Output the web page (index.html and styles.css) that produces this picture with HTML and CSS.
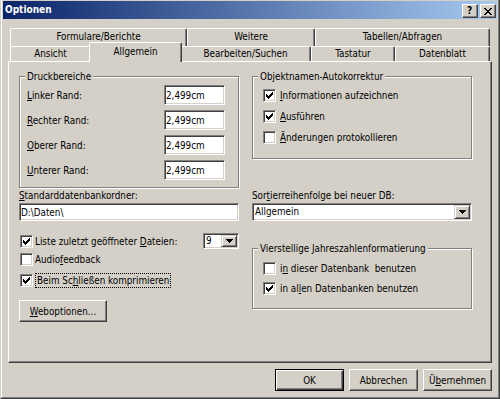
FILE: index.html
```html
<!DOCTYPE html>
<html lang="de">
<head>
<meta charset="utf-8">
<title>Optionen</title>
<link rel="stylesheet" href="styles.css">
</head>
<body>
<div class="window">
  <div class="frame">
    <div class="titlebar">
      <span class="title">Optionen</span>
      <div class="caption-buttons">
        <span class="cbtn help">?</span>
        <span class="cbtn close"><svg width="8" height="7" viewBox="0 0 8 7" shape-rendering="crispEdges"><path d="M0 0h2v1h-2zM6 0h2v1h-2zM1 1h2v1h-2zM5 1h2v1h-2zM2 2h4v1h-4zM3 3h2v1h-2zM2 4h4v1h-4zM1 5h2v1h-2zM5 5h2v1h-2zM0 6h2v1h-2zM6 6h2v1h-2z" fill="#000"/></svg></span>
      </div>
    </div>

    <div class="tabs">
      <div class="tabrow back">
        <div class="tab tab-formulare">Formulare/Berichte</div>
        <div class="tab tab-weitere">Weitere</div>
        <div class="tab tab-tabellen">Tabellen/Abfragen</div>
      </div>
      <div class="tabrow front">
        <div class="tab tab-ansicht">Ansicht</div>
        <div class="tab tab-allgemein active">Allgemein</div>
        <div class="tab tab-bearbeiten">Bearbeiten/Suchen</div>
        <div class="tab tab-tastatur">Tastatur</div>
        <div class="tab tab-datenblatt">Datenblatt</div>
      </div>
    </div>

    <div class="panel">
      <div class="grid">
        <fieldset class="group druck">
          <legend>Druckbereiche</legend>
          <div class="margins">
            <label><u>L</u>inker Rand:</label><input class="edit" type="text" value="2,499cm">
            <label><u>R</u>echter Rand:</label><input class="edit" type="text" value="2,499cm">
            <label><u>O</u>berer Rand:</label><input class="edit" type="text" value="2,499cm">
            <label><u>U</u>nterer Rand:</label><input class="edit" type="text" value="2,499cm">
          </div>
        </fieldset>

        <fieldset class="group auto">
          <legend>Objektnamen-Autokorrektur</legend>
          <div class="checks">
            <div class="check"><span class="box on"><svg width="7" height="7" viewBox="0 0 7 7" shape-rendering="crispEdges"><path d="M0 2h1v3h-1zM1 3h1v3h-1zM2 4h1v3h-1zM3 3h1v3h-1zM4 2h1v3h-1zM5 1h1v3h-1zM6 0h1v3h-1z" fill="#000"/></svg></span><span><u>I</u>nformationen aufzeichnen</span></div>
            <div class="check"><span class="box on"><svg width="7" height="7" viewBox="0 0 7 7" shape-rendering="crispEdges"><path d="M0 2h1v3h-1zM1 3h1v3h-1zM2 4h1v3h-1zM3 3h1v3h-1zM4 2h1v3h-1zM5 1h1v3h-1zM6 0h1v3h-1z" fill="#000"/></svg></span><span><u>A</u>usführen</span></div>
            <div class="check"><span class="box"></span><span><u>Ä</u>nderungen protokollieren</span></div>
          </div>
        </fieldset>

        <div class="field">
          <label><u>S</u>tandarddatenbankordner:</label>
          <input class="edit wide" type="text" value="D:\Daten\">
        </div>

        <div class="field">
          <label>Sor<u>t</u>ierreihenfolge bei neuer DB:</label>
          <div class="combo wide"><span class="combo-text">Allgemein</span><span class="drop"><svg width="7" height="4" viewBox="0 0 7 4" shape-rendering="crispEdges"><path d="M0 0h7v1h-7zM1 1h5v1h-5zM2 2h3v1h-3zM3 3h1v1h-1z" fill="#000"/></svg></span></div>
        </div>

        <div class="opts">
          <div class="row-list">
            <div class="check left"><span class="box on"><svg width="7" height="7" viewBox="0 0 7 7" shape-rendering="crispEdges"><path d="M0 2h1v3h-1zM1 3h1v3h-1zM2 4h1v3h-1zM3 3h1v3h-1zM4 2h1v3h-1zM5 1h1v3h-1zM6 0h1v3h-1z" fill="#000"/></svg></span><span>Liste zuletzt geöffneter <u>D</u>ateien:</span></div>
            <div class="combo small"><span class="combo-text">9</span><span class="drop"><svg width="7" height="4" viewBox="0 0 7 4" shape-rendering="crispEdges"><path d="M0 0h7v1h-7zM1 1h5v1h-5zM2 2h3v1h-3zM3 3h1v1h-1z" fill="#000"/></svg></span></div>
          </div>
          <div class="check left audio"><span class="box"></span><span>Audio<u>f</u>eedback</span></div>
          <div class="check left compact"><span class="box on"><svg width="7" height="7" viewBox="0 0 7 7" shape-rendering="crispEdges"><path d="M0 2h1v3h-1zM1 3h1v3h-1zM2 4h1v3h-1zM3 3h1v3h-1zM4 2h1v3h-1zM5 1h1v3h-1zM6 0h1v3h-1z" fill="#000"/></svg></span><span class="focus">Beim Sc<u>h</u>ließen komprimieren</span></div>
          <button class="btn web" type="button"><u>W</u>eboptionen...</button>
        </div>

        <fieldset class="group jahr">
          <legend>Vierstellige Jahreszahlenformatierung</legend>
          <div class="checks tight">
            <div class="check"><span class="box"></span><span>i<u>n</u> dieser Datenbank  benutzen</span></div>
            <div class="check"><span class="box on"><svg width="7" height="7" viewBox="0 0 7 7" shape-rendering="crispEdges"><path d="M0 2h1v3h-1zM1 3h1v3h-1zM2 4h1v3h-1zM3 3h1v3h-1zM4 2h1v3h-1zM5 1h1v3h-1zM6 0h1v3h-1z" fill="#000"/></svg></span><span>in al<u>l</u>en Datenbanken benutzen</span></div>
          </div>
        </fieldset>
      </div>
    </div>

    <div class="actions">
      <button class="btn default" type="button">OK</button>
      <button class="btn" type="button">Abbrechen</button>
      <button class="btn" type="button">Ü<u>b</u>ernehmen</button>
    </div>
  </div>
</div>
</body>
</html>
```

FILE: styles.css
```css
* { box-sizing: border-box; }

html, body {
  margin: 0;
  padding: 0;
}

body {
  width: 500px;
  height: 399px;
  overflow: hidden;
  background: #d4d0c8;
  color: #000;
  font-family: "DejaVu Sans Condensed", "DejaVu Sans", sans-serif;
  font-stretch: condensed;
  font-size: 9.8px;
}

u { text-decoration-thickness: 1px; text-underline-offset: 1px; }

.window {
  width: 500px;
  height: 399px;
  background: #d4d0c8;
  border-left: 1px solid #d4d0c8;
  border-right: 1px solid #404040;
  border-bottom: 1px solid #404040;
}

.frame {
  height: 100%;
  border-left: 1px solid #fff;
  border-right: 1px solid #808080;
  border-bottom: 1px solid #808080;
  padding: 1px 1px 0 1px;
  display: flex;
  flex-direction: column;
}

/* title bar */
.titlebar {
  height: 18px;
  flex: none;
  display: flex;
  justify-content: space-between;
  align-items: flex-start;
  padding: 0 1px 0 1px;
  background: linear-gradient(to right, #0a246a, #a6caf0);
}

.title {
  color: #fff;
  font-weight: bold;
  font-size: 10px;
  line-height: 18px;
  padding-left: 1px;
}

.caption-buttons {
  display: flex;
  gap: 2px;
  margin-top: 3px;
}

.cbtn {
  width: 16px;
  height: 14px;
  display: flex;
  align-items: center;
  justify-content: center;
  background: #d4d0c8;
  border: 1px solid;
  border-color: #fff #404040 #404040 #fff;
  box-shadow: inset -1px -1px #808080;
}

.cbtn.help {
  font-family: "DejaVu Sans", sans-serif;
  font-weight: bold;
  font-size: 10px;
  line-height: 12px;
  padding-right: 1px;
}

.cbtn.close svg { margin-right: 1px; }

/* tabs */
.tabs {
  flex: none;
  width: 480px;
  margin: 9px 0 0 7px;
}

.tabrow { display: flex; }
.tabrow.back { height: 18px; }
.tabrow.front { height: 15px; }

.tab {
  flex: none;
  height: 100%;
  text-align: center;
  white-space: nowrap;
  background: #d4d0c8;
  border-top: 1px solid #fff;
  border-left: 1px solid #fff;
  border-right: 1px solid #404040;
  border-radius: 2px 2px 0 0;
  box-shadow: inset -1px 0 #808080;
}

.back .tab { line-height: 16px; }
.front .tab { line-height: 13px; }

.tab-formulare { width: 177px; }
.tab-weitere { width: 128px; }
.tab-tabellen { width: 175px; }
.tab-ansicht { width: 81px; }
.tab-allgemein { width: 93px; }
.tab-bearbeiten { width: 131px; }
.tab-tastatur { width: 84px; }
.tab-datenblatt { width: 95px; }

.tab.active {
  position: relative;
  z-index: 2;
  height: 20px;
  margin: -4px -2px 0;
  line-height: 17px;
}

/* panel */
.panel {
  flex: none;
  width: 484px;
  height: 302px;
  margin-left: 5px;
  padding: 8px 0 0 10px;
  border-top: 1px solid #fff;
  border-left: 1px solid #fff;
  border-right: 1px solid #404040;
  border-bottom: 1px solid #404040;
  box-shadow: inset -1px -1px #808080;
}

.grid {
  display: grid;
  grid-template-columns: 220px 220px;
  column-gap: 13px;
  align-items: start;
}

.group {
  margin: 0;
  min-width: 0;
  border: 1px solid #808080;
  box-shadow: inset 1px 1px #fff, 1px 1px #fff;
}

.group legend {
  padding: 0 2px;
  line-height: 13px;
  background: #d4d0c8;
}

.druck { padding: 2px 12px 7px 7px; }
.druck legend { margin-left: -2px; }

.auto { padding: 6px 0 14px 10px; }
.auto legend { margin-left: -5px; }

.jahr { margin-top: 21px; padding: 7px 0 13px 10px; }
.jahr legend { margin-left: -5px; }

.margins {
  display: grid;
  grid-template-columns: 137px 61px;
  grid-auto-rows: 20px;
  row-gap: 5px;
  align-items: center;
}

.edit {
  display: block;
  margin: 0;
  height: 20px;
  padding: 0 1px;
  font: inherit;
  color: #000;
  background: #fff;
  border: 1px solid;
  border-color: #808080 #fff #fff #808080;
  box-shadow: inset 1px 1px #404040, inset -1px -1px #d4d0c8;
  outline: none;
}

.checks {
  display: flex;
  flex-direction: column;
  gap: 8px;
}

.checks.tight { gap: 7px; }

.check {
  display: flex;
  align-items: center;
  gap: 4px;
  height: 13px;
  line-height: 13px;
  white-space: pre;
}

.check.left { gap: 2px; margin-left: 1px; }

.box {
  flex: none;
  width: 13px;
  height: 13px;
  display: flex;
  align-items: center;
  justify-content: center;
  background: #fff;
  border: 1px solid;
  border-color: #808080 #fff #fff #808080;
  box-shadow: inset 1px 1px #404040, inset -1px -1px #d4d0c8;
}

/* lower fields */
.field label {
  display: block;
  line-height: 13px;
  margin-top: 1px;
}

.field .wide {
  margin-top: 1px;
  width: 100%;
  height: 18px;
}

.combo {
  display: flex;
  align-items: stretch;
  background: #fff;
  border: 1px solid;
  border-color: #808080 #fff #fff #808080;
  box-shadow: inset 1px 1px #404040, inset -1px -1px #d4d0c8;
  padding: 1px;
}

.combo-text {
  flex: 1;
  line-height: 14px;
  padding-left: 1px;
  overflow: hidden;
}

.combo.small { width: 36px; height: 16px; }
.combo.small .combo-text { line-height: 12px; }

.drop {
  flex: none;
  width: 16px;
  display: flex;
  align-items: center;
  justify-content: center;
  background: #d4d0c8;
  border: 1px solid;
  border-color: #d4d0c8 #404040 #404040 #d4d0c8;
  box-shadow: inset 1px 1px #fff, inset -1px -1px #808080;
}

.opts {
  display: flex;
  flex-direction: column;
  align-items: flex-start;
  padding-top: 12px;
}

.row-list {
  width: 100%;
  height: 16px;
  display: flex;
  align-items: center;
  justify-content: space-between;
}

.audio { margin-top: 4px; }
.compact { margin-top: 8px; gap: 0; }

.focus {
  border: 1px dotted #000;
  padding: 0 1px;
  line-height: 13px;
}

/* buttons */
.btn {
  margin: 0;
  padding: 0;
  height: 22px;
  font: inherit;
  color: #000;
  text-align: center;
  background: #d4d0c8;
  border: 1px solid;
  border-color: #fff #404040 #404040 #fff;
  box-shadow: inset -1px -1px #808080, inset 1px 1px #d4d0c8;
}

.btn.web {
  width: 88px;
  margin-top: 13px;
}

.actions {
  flex: none;
  display: flex;
  justify-content: flex-end;
  gap: 5px;
  margin-top: 6px;
  padding-right: 5px;
}

.actions .btn { width: 69px; }

.btn.default {
  border-color: #000;
  box-shadow: inset 1px 1px #fff, inset -1px -1px #404040, inset -2px -2px #808080;
}
```
